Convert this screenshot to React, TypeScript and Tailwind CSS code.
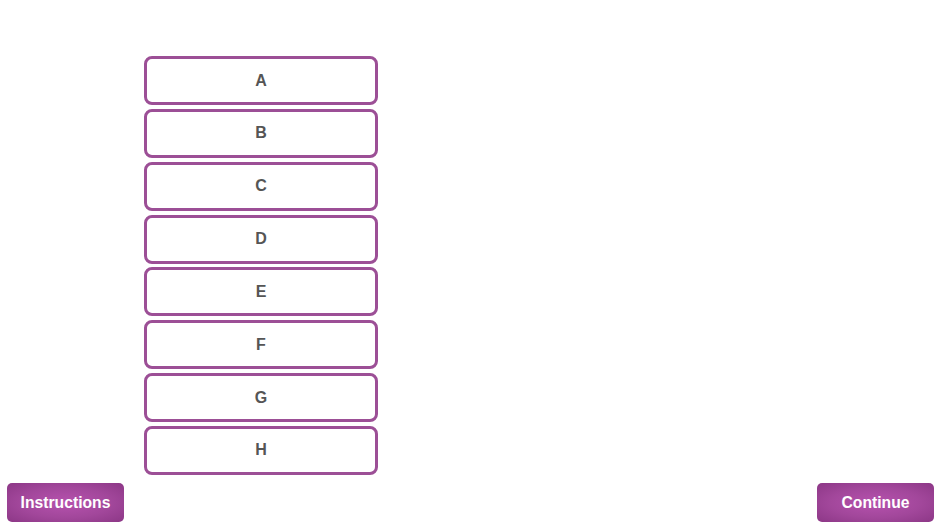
import React from "react";

export default function App() {
  const items = ["A", "B", "C", "D", "E", "F", "G", "H"];
  return (
    <div className="flex h-[528px] w-[940px] flex-col bg-white font-['Liberation_Sans',Arial,sans-serif]">
      <div className="ml-[144px] mt-[56px] flex w-[234px] flex-col gap-[3.857px]">
        {items.map((l) => (
          <div
            key={l}
            className="flex h-[49px] items-center justify-center rounded-[8px] border-[3px] border-[#9c4f96] bg-white text-[16px] font-bold text-[#555555]"
          >
            {l}
          </div>
        ))}
      </div>
      <div className="mt-[8px] flex justify-between pl-[7px] pr-[6px]">
        <button className="flex h-[39px] w-[117px] items-center justify-center rounded-[5px] bg-[radial-gradient(ellipse_at_center,#b652ae_0%,#a2479b_55%,#8c3786_100%)] text-[15.7px] font-bold text-white">
          Instructions
        </button>
        <button className="flex h-[39px] w-[117px] items-center justify-center rounded-[5px] bg-[radial-gradient(ellipse_at_center,#b652ae_0%,#a2479b_55%,#8c3786_100%)] text-[15.7px] font-bold text-white">
          Continue
        </button>
      </div>
    </div>
  );
}
